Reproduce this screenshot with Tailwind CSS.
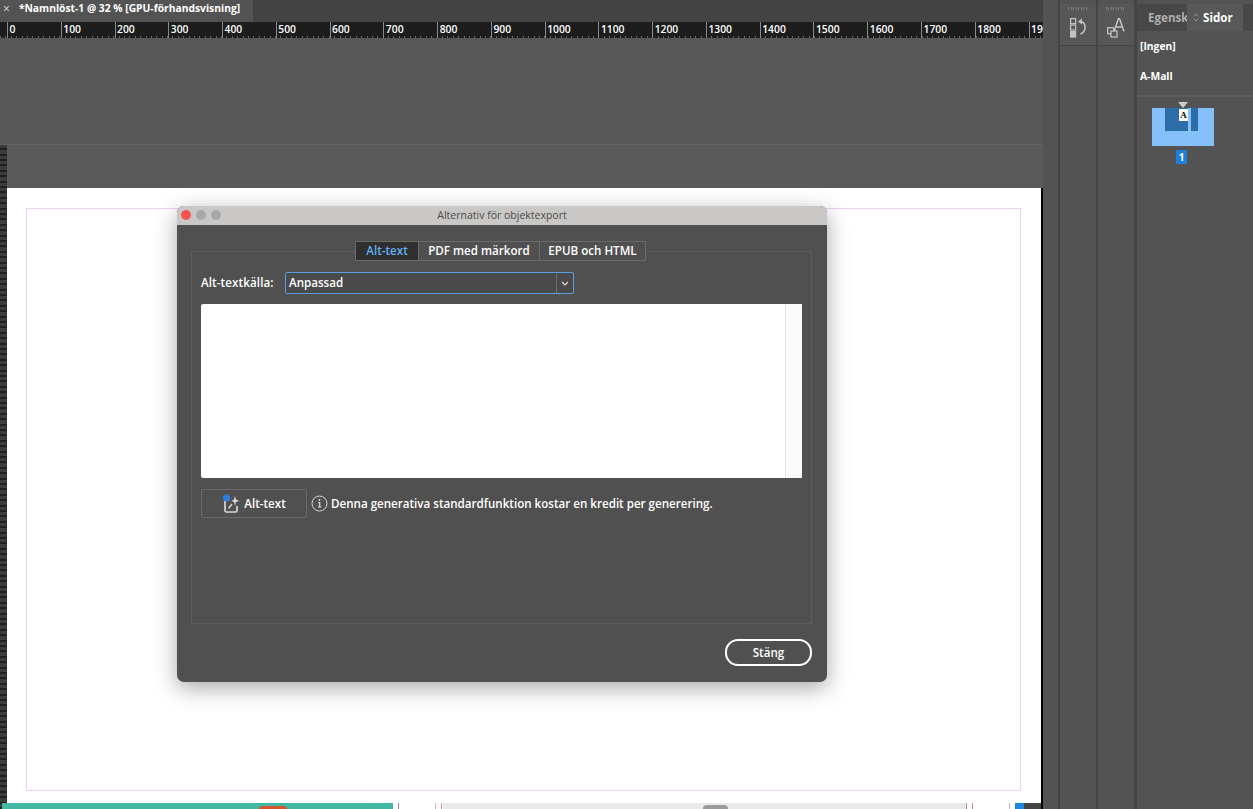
<!DOCTYPE html>
<html lang="sv">
<head>
    <meta charset="UTF-8">
    <title>Namnlöst-1</title>
    <script src="https://cdn.jsdelivr.net/npm/@tailwindcss/browser@4"></script>
</head>
<body class="bg-[#535353] w-[1253px] h-[809px] overflow-hidden font-['Open_Sans',sans-serif] text-[11.6px] font-semibold text-white">
<div class="relative flex w-full h-full">
    <!-- document area -->
    <div class="w-[1043px] h-full flex flex-col bg-[#585858] shrink-0">
        <div class="h-[22px] flex bg-[#434343] shrink-0">
            <div class="w-[253px] bg-[#535353] flex items-center gap-[9px] pl-[3px] pb-[5px] text-[10.3px] font-bold whitespace-nowrap">
                <span class="text-[#dddddd] font-normal text-[12px]">×</span>
                <span>*Namnlöst-1 @ 32 % [GPU-förhandsvisning]</span>
            </div>
        </div>
        <!-- ruler -->
        <div class="h-[16px] flex bg-[#1d1d1d] shrink-0 overflow-hidden pl-[7px] bg-[repeating-linear-gradient(90deg,#666666_0,#666666_1px,transparent_1px,transparent_5.39px)] bg-[length:100%_2px] bg-bottom bg-no-repeat">
            <div id="ruler" class="flex"></div>
        </div>
        <div class="h-[107px] bg-[#585858] shrink-0 border-b border-[#636363]"></div>
        <div class="flex-1 flex min-h-0">
            <div class="w-[7px] bg-[repeating-linear-gradient(0deg,#202020_0,#202020_2px,#3c3c3c_2px,#3c3c3c_5.4px)] shrink-0"></div>
            <div class="flex-1 flex flex-col">
                <div class="h-[43px] shrink-0 bg-[#5a5a5a]"></div>
                <div class="flex-1 bg-white flex flex-col border-r-2 border-black">
                    <div class="mt-[20px] ml-[19px] w-[995px] h-[583px] border border-[#ecd0f0] shrink-0"></div>
                    <!-- next spread, cut off by the window -->
                    <div class="h-[6px] mt-auto flex items-start">
                        <div class="w-[391px] -ml-[5px] h-[6px] bg-[#41b8a4] relative overflow-hidden">
                            <div class="absolute left-[256px] top-[3px] w-[30px] h-[10px] rounded-full bg-[#d9532c]"></div>
                        </div>
                        <div class="w-[1px] h-[6px] ml-[5px] bg-[#888888]"></div>
                        <div class="w-[1px] h-[6px] ml-[36px] bg-[#bbbbbb]"></div>
                        <div class="w-[1px] h-[6px] ml-[5px] bg-[#e58fb0]"></div>
                        <div class="w-[523px] h-[6px] ml-[1px] bg-[#e9e9e9] relative overflow-hidden">
                            <div class="absolute left-[260px] top-[2px] w-[25px] h-[8px] rounded-full bg-[#9a9a9a]"></div>
                        </div>
                        <div class="w-[1px] h-[6px] bg-[#cc8888]"></div>
                        <div class="w-[1px] h-[6px] ml-[5px] bg-[#cc8888]"></div>
                        <div class="w-[1px] h-[6px] ml-[36px] bg-[#bbbbbb]"></div>
                        <div class="w-[9px] h-[6px] ml-[5px] bg-[#1d84e0]"></div>
                        <div class="flex-1 h-[6px] bg-[#444444]"></div>
                    </div>
                </div>
            </div>
        </div>
    </div>

    <!-- narrow panels -->
    <div class="w-[15px] shrink-0 bg-[#535353]"></div>
    <div class="w-[2px] shrink-0 bg-[#444444]"></div>
    <div class="w-[36px] shrink-0 flex flex-col pt-[4px] bg-[#535353]">
        <div class="h-[42px] bg-[#575757] border-b border-[#444444] flex flex-col items-center pt-[3px]">
            <div class="w-[20px] h-[3px] mb-[8px] bg-[repeating-linear-gradient(90deg,#7c7c7c_0,#7c7c7c_1px,transparent_1px,transparent_2.5px)]"></div>
            <svg width="16" height="20" viewBox="0 0 16 20" fill="none" stroke="#c4c4c4" stroke-width="1.2">
                <rect x="0.6" y="0.6" width="5" height="5"/><rect x="0.6" y="7" width="5" height="5"/>
                <rect x="0.6" y="13.5" width="5" height="5.5" fill="#c4c4c4"/>
                <path d="M12 .5 8 3.500l4 3z" fill="#c4c4c4" stroke="none"/>
                <path d="M10 3.500c3.500 0 5 2.500 5 5.500 0 3.500-2 6-4.500 7" stroke-width="1.500"/>
            </svg>
        </div>
    </div>
    <div class="w-[2px] shrink-0 bg-[#444444]"></div>
    <div class="w-[36px] shrink-0 flex flex-col pt-[4px] bg-[#535353]">
        <div class="h-[42px] bg-[#575757] border-b border-[#444444] flex flex-col items-center pt-[3px]">
            <div class="w-[20px] h-[3px] mb-[8px] bg-[repeating-linear-gradient(90deg,#7c7c7c_0,#7c7c7c_1px,transparent_1px,transparent_2.5px)]"></div>
            <svg width="18" height="20" viewBox="0 0 18 20" fill="none" stroke="#c8c8c8" stroke-width="1.4">
                <path d="M7 13.500 11.500 .5h1L17 13.500M8.500 9h7.500"/>
                <rect x="0.700" y="9.700" width="6" height="6" stroke-width="1.200"/><rect x="4" y="13" width="6" height="6" fill="#575757" stroke-width="1.200"/>
            </svg>
        </div>
    </div>
    <div class="w-[3px] shrink-0 bg-[#444444]"></div>

    <!-- pages panel -->
    <div class="flex-1 flex flex-col pt-[4px] bg-[#535353]">
        <div class="h-[27px] flex shrink-0 bg-[#484848] font-bold">
            <div class="w-[50px] flex items-center pl-[11px] text-[#aeaeae] overflow-hidden whitespace-nowrap">Egensk</div>
            <div class="w-[56px] bg-[#585858] flex items-center gap-[4px] pl-[6px]">
                <svg width="6" height="9" viewBox="0 0 6 9" fill="none" stroke="#9a9a9a"><path d="M.8 3.4 3 1l2.200 2.400M.8 5.600 3 8l2.200-2.400"/></svg>
                <span>Sidor</span>
            </div>
        </div>
        <div class="h-[66px] shrink-0 border-b-2 border-[#5c5c5c] pl-[3px] text-[10.3px] font-bold">
            <div class="mt-[8px]">[Ingen]</div>
            <div class="mt-[15px]">A-Mall</div>
        </div>
        <div class="pl-[15px] pt-[5px] flex flex-col">
            <div class="relative w-[62px] mt-[6px] h-[38px] bg-[#85c0fa]">
                <div class="absolute left-[26px] top-[-6px] w-0 h-0 border-x-[5px] border-x-transparent border-t-[6px] border-t-[#cfcfcf]"></div>
                <div class="absolute left-[13px] top-0 w-[23px] h-[23px] bg-[#2c6ca8]"></div>
                <div class="absolute left-[39px] top-0 w-[7px] h-[23px] bg-[#2c6ca8]"></div>
                <div class="absolute left-[27px] top-[1px] w-[9px] h-[12px] bg-white text-black text-[9px] leading-[12px] text-center font-bold font-['Liberation_Serif',serif]">A</div>
            </div>
            <div class="w-[11px] h-[14px] ml-[24px] mt-[4px] bg-[#1a80dc] text-[10px] leading-[14px] text-center font-bold">1</div>
        </div>
    </div>

    <!-- dialog -->
    <div class="absolute left-[177px] top-[206px] w-[650px] h-[476px] rounded-[7px] overflow-hidden bg-[#505050] shadow-[0_6px_22px_rgba(0,0,0,0.35)] flex flex-col">
        <div class="relative h-[19px] shrink-0 bg-[#c9c8c6] flex items-center justify-center text-[#4b4b4b] text-[10.5px] font-normal">
            <div class="absolute left-[4px] top-[4px] flex gap-[5px]">
                <span class="w-[10px] h-[10px] rounded-full bg-[#f8524e]"></span>
                <span class="w-[10px] h-[10px] rounded-full bg-[#a8a8a8]"></span>
                <span class="w-[10px] h-[10px] rounded-full bg-[#a8a8a8]"></span>
            </div>
            Alternativ för objektexport
        </div>
        <div class="relative flex-1 px-[14px] pt-[26px]">
            <div class="w-[621px] h-[373px] border border-[#5d5d5d] px-[9px]">
                <!-- tabs -->
                <div class="absolute left-[178px] top-[16px] h-[20px] flex border border-[#6b6b6b] bg-[#505050] whitespace-nowrap">
                    <div class="w-[62px] bg-[#2f2f2f] text-[#62b0f5] flex items-center justify-center">Alt-text</div>
                    <div class="w-[121px] border-l border-[#6b6b6b] flex items-center justify-center">PDF med märkord</div>
                    <div class="w-[106px] border-l border-[#6b6b6b] flex items-center justify-center">EPUB och HTML</div>
                </div>
                <!-- source -->
                <div class="flex items-center mt-[20px] h-[22px]">
                    <span class="w-[84px] whitespace-nowrap tracking-[0.1px]">Alt-textkälla:</span>
                    <div class="w-[289px] h-[22px] rounded-[2px] border border-[#5a9fe0] flex items-center justify-between pl-[3px] bg-[#4a4a4a]">
                        <span>Anpassad</span>
                        <div class="w-[17px] h-full border-l border-[#6b6b6b] flex items-center justify-center">
                            <svg width="8" height="5" viewBox="0 0 8 5" fill="none" stroke="#e0e0e0" stroke-width="1.2"><path d="M1 1l3 3 3-3"/></svg>
                        </div>
                    </div>
                </div>
                <!-- text area -->
                <div class="mt-[10px] h-[174px] w-[601px] bg-white rounded-[2px] flex justify-end">
                    <div class="w-[17px] h-full border-l border-[#e4e4e4] bg-[#fafafa]"></div>
                </div>
                <!-- generate -->
                <div class="flex items-center mt-[11px]">
                    <div class="w-[106px] h-[29px] border border-[#6a6a6a] rounded-[2px] flex items-center justify-center gap-[4px]">
                        <svg width="18" height="20" viewBox="0 0 18 20" fill="none">
                            <path d="M3 7v9.500q0 1.500 1.500 1.500h9q1.500 0 1.500-1.500V12" stroke="#d8d8d8" stroke-width="1.700"/>
                            <path d="M6.500 14.500 10 10" stroke="#d8d8d8" stroke-width="1.500"/>
                            <path d="M13 2l1 3.500L17.500 7l-3.500 1-1 4-1-4-2.500-1 2.500-1.500z" fill="#d8d8d8"/>
                            <circle cx="4.500" cy="4" r="3.600" fill="#2b7fe0"/>
                        </svg>
                        <span>Alt-text</span>
                    </div>
                    <svg class="ml-[4px]" width="17" height="17" viewBox="0 0 17 17" fill="none" stroke="#d8d8d8"><circle cx="8.500" cy="8.500" r="7.500"/><path d="M7.200 7.600h1.500v4.200M7 11.900h3.200" stroke-width="1.200"/><circle cx="8.400" cy="5" r=".9" fill="#d8d8d8" stroke="none"/></svg>
                    <span class="ml-[3px] whitespace-nowrap">Denna generativa standardfunktion kostar en kredit per generering.</span>
                </div>
            </div>
            <div class="flex justify-end mt-[15px] pr-[1px]">
                <div class="w-[87px] h-[27px] rounded-[13px] border-2 border-white flex items-center justify-center">Stäng</div>
            </div>
        </div>
    </div>
</div>
<script>
    // ruler labels, 100 units = 53.78px
    const labels = [];
    for (let i = 0; i <= 1900; i += 100) labels.push(i);
    document.getElementById('ruler').innerHTML = labels.map(n => `<div class="w-[53.78px] shrink-0 border-l border-[#8a8a8a] pl-[1.5px] text-[10.3px] leading-[14px] text-white">${n}</div>`).join('');
</script>
</body>
</html>
